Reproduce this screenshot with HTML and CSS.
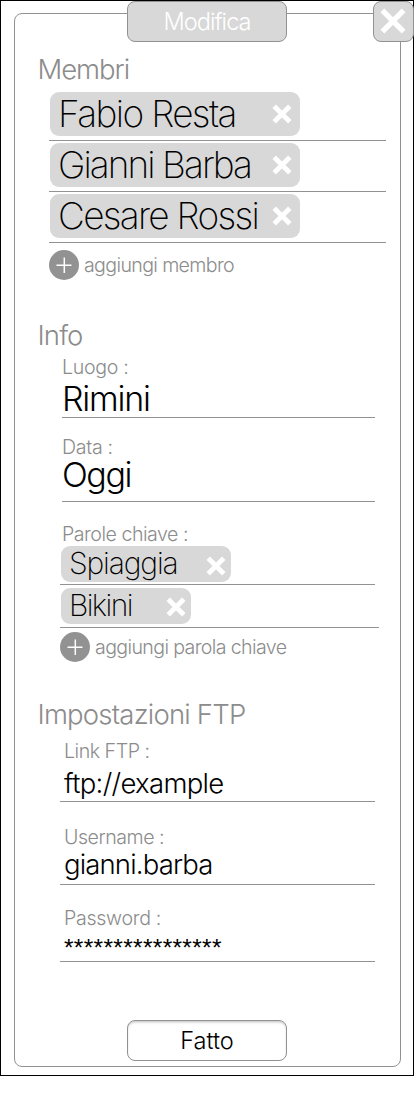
FILE: index.html
```html
<!DOCTYPE html>
<html lang="it">
<head>
<meta charset="utf-8">
<title>Modifica</title>
<link rel="stylesheet" href="styles.css">
</head>
<body>
<svg class="defs" width="0" height="0">
  <symbol id="cross" viewBox="0 0 20 20"><path d="M2.2 2.2 17.8 17.8M17.8 2.2 2.2 17.8" fill="none" stroke="#fff" stroke-width="4.8"/></symbol>
  <symbol id="cross-large" viewBox="0 0 26 26"><path d="M2.4 2.4 23.6 23.6M23.6 2.4 2.4 23.6" fill="none" stroke="#fff" stroke-width="5.4"/></symbol>
  <symbol id="plus" viewBox="0 0 30 30"><circle cx="15" cy="15" r="15" fill="#929292"/><path d="M7.5 15.3h15M15.3 7.5v15.5" fill="none" stroke="#fff" stroke-width="1.5"/></symbol>
</svg>
<main class="screen">
  <header class="title">Modifica</header>
  <button class="close" aria-label="Chiudi"><svg width="26" height="26"><use href="#cross-large"/></svg></button>
  <form class="panel">
    <section class="members">
      <h2 class="heading heading-members">Membri</h2>
      <div class="member-list">
        <div class="member"><div class="tag"><span class="name-fabio">Fabio Resta</span><svg width="20" height="20"><use href="#cross"/></svg></div></div>
        <div class="member"><div class="tag"><span class="name-gianni">Gianni Barba</span><svg width="20" height="20"><use href="#cross"/></svg></div></div>
        <div class="member"><div class="tag"><span class="name-cesare">Cesare Rossi</span><svg width="20" height="20"><use href="#cross"/></svg></div></div>
        <div class="add add-member"><svg width="30" height="30"><use href="#plus"/></svg><span>aggiungi membro</span></div>
      </div>
    </section>
    <section class="info">
      <h2 class="heading">Info</h2>
      <div class="field place">
        <div class="label label-short">Luogo :</div>
        <div class="value">Rimini</div>
      </div>
      <div class="field date">
        <div class="label label-short">Data :</div>
        <div class="value">Oggi</div>
      </div>
      <div class="keywords">
        <div class="label">Parole chiave :</div>
        <div class="keyword"><div class="tag tag-small tag-long"><span>Spiaggia</span><svg width="20" height="20"><use href="#cross"/></svg></div></div>
        <div class="keyword keyword-last"><div class="tag tag-small tag-short"><span>Bikini</span><svg width="20" height="20"><use href="#cross"/></svg></div></div>
        <div class="add add-keyword"><svg width="30" height="30"><use href="#plus"/></svg><span>aggiungi parola chiave</span></div>
      </div>
    </section>
    <section class="ftp">
      <h2 class="heading heading-ftp">Impostazioni FTP</h2>
      <div class="field link">
        <div class="label">Link FTP :</div>
        <div class="value">ftp://example</div>
      </div>
      <div class="field user">
        <div class="label">Username :</div>
        <div class="value">gianni.barba</div>
      </div>
      <div class="field password">
        <div class="label label-short">Password :</div>
        <div class="value">****************</div>
      </div>
    </section>
    <button class="done" type="button">Fatto</button>
  </form>
</main>
</body>
</html>
```
FILE: styles.css
```css
* { box-sizing: border-box; }

body {
  margin: 0;
  background: #fff;
  color: #000;
  font-family: Inter, "Liberation Sans", sans-serif;
  font-weight: 300;
  white-space: nowrap;
}

svg { display: block; flex: none; }
.defs { position: absolute; }

.screen {
  position: relative;
  height: 1076px;
  padding: 12px 12px 0 13px;
  border: 1px solid #000;
}

.panel {
  display: flex;
  flex-direction: column;
  height: 1054px;
  padding: 39px 14px 5px 23px;
  border: 1px solid #929292;
  border-radius: 8px;
}

/* Title tab and close button sit over the panel's edge */
.title,
.close {
  position: absolute;
  top: 0;
  height: 41px;
  border: 1px solid #929292;
  border-radius: 8px;
  background: #d8d8d8;
}

.title {
  left: 126px;
  width: 160px;
  color: #fff;
  font-size: 23.6px;
  line-height: 39px;
  letter-spacing: -0.97px;
  text-align: center;
}

.close {
  right: -1px;
  display: grid;
  place-items: center;
  width: 41px;
  padding: 0 1px 1px 0;
}

.heading {
  margin: 0 0 0 -0.5px;
  color: #8c8c8c;
  font-size: 27.5px;
  font-weight: 300;
  line-height: 32px;
  letter-spacing: -0.88px;
}

.heading-members { letter-spacing: -1.05px; }
.heading-ftp { letter-spacing: -0.8px; }

/* Members */
.member-list { padding: 7px 0 0 11px; }

.member {
  width: 337px;
  height: 51px;
  padding-left: 1px;
  border-bottom: 1px solid #929292;
}

.member:first-child { height: 49px; }
.member:nth-child(n + 2) { padding-top: 2px; }

.tag {
  display: flex;
  justify-content: space-between;
  align-items: center;
  width: 250px;
  height: 44px;
  padding: 0 8px;
  border-radius: 9px;
  background: #d8d8d8;
  font-size: 37px;
  font-weight: 200;
  line-height: 43px;
}

.tag span { height: 44px; }
.name-fabio { letter-spacing: -1.65px; }
.name-gianni { letter-spacing: -1.95px; }
.name-cesare { letter-spacing: -1.7px; }

.add {
  display: flex;
  gap: 5px;
  color: #8c8c8c;
  font-size: 19.6px;
  line-height: 30px;
}

.add-member { margin-top: 7px; letter-spacing: -0.64px; }
.add-keyword { margin-top: 4px; letter-spacing: -0.63px; }

/* Fields */
.info { margin-top: 39px; }
.ftp { margin-top: 36px; }

.label {
  height: 24px;
  padding-left: 2px;
  color: #8c8c8c;
  font-size: 19.6px;
  line-height: 24px;
  letter-spacing: -0.48px;
}

.label-short { letter-spacing: -0.3px; }
.field .label { height: 20px; }

.place,
.date {
  width: 313px;
  margin-left: 24px;
  border-bottom: 1px solid #929292;
}

.place { height: 63px; margin-top: 4px; }
.place .label, .date .label { padding-left: 0; }
.date { height: 67px; margin-top: 17px; }

.place .value,
.date .value {
  font-size: 34px;
  line-height: 40px;
  letter-spacing: -1.2px;
}

.place .value { padding-top: 4px; }
.date .value { letter-spacing: -1.45px; }

.keywords { margin: 20px 0 0 22px; }

.keyword {
  width: 315px;
  height: 39px;
  padding-left: 1px;
  border-bottom: 1px solid #929292;
}

.keyword-last { width: 319px; height: 43px; padding-top: 3px; }

.tag-small {
  height: 36px;
  padding-right: 5px;
  font-size: 30px;
  line-height: 35px;
}

.tag-small span { height: 36px; }
.tag-long { width: 170px; letter-spacing: -1.15px; }
.tag-short { width: 130px; letter-spacing: -1.6px; }
.tag-long svg { margin-top: 4px; }
.tag-short svg { margin-top: 2px; }

.link,
.user,
.password {
  width: 315px;
  margin-left: 22px;
  padding-left: 2px;
  border-bottom: 1px solid #929292;
}

.link { height: 63px; margin-top: 9px; }
.user { height: 60px; margin-top: 23px; }
.password { height: 56px; margin-top: 21px; }

.link .value,
.user .value,
.password .value {
  padding: 3px 0 0 2px;
  font-size: 27.5px;
  line-height: 32px;
  letter-spacing: -0.85px;
}

.link .value { padding-top: 8px; letter-spacing: -0.68px; }

.password .value {
  padding-top: 6px;
  font-family: "Liberation Sans", sans-serif;
  font-size: 24.5px;
  letter-spacing: 0.33px;
}

.done {
  width: 160px;
  height: 41px;
  margin: 58px 0 0 89px;
  padding: 0;
  border: 1px solid #929292;
  border-radius: 8px;
  background: #fff;
  box-shadow: inset 0 2px 3px -1px #bbb;
  color: #000;
  font: 300 23.6px/39px Inter, "Liberation Sans", sans-serif;
}
```
